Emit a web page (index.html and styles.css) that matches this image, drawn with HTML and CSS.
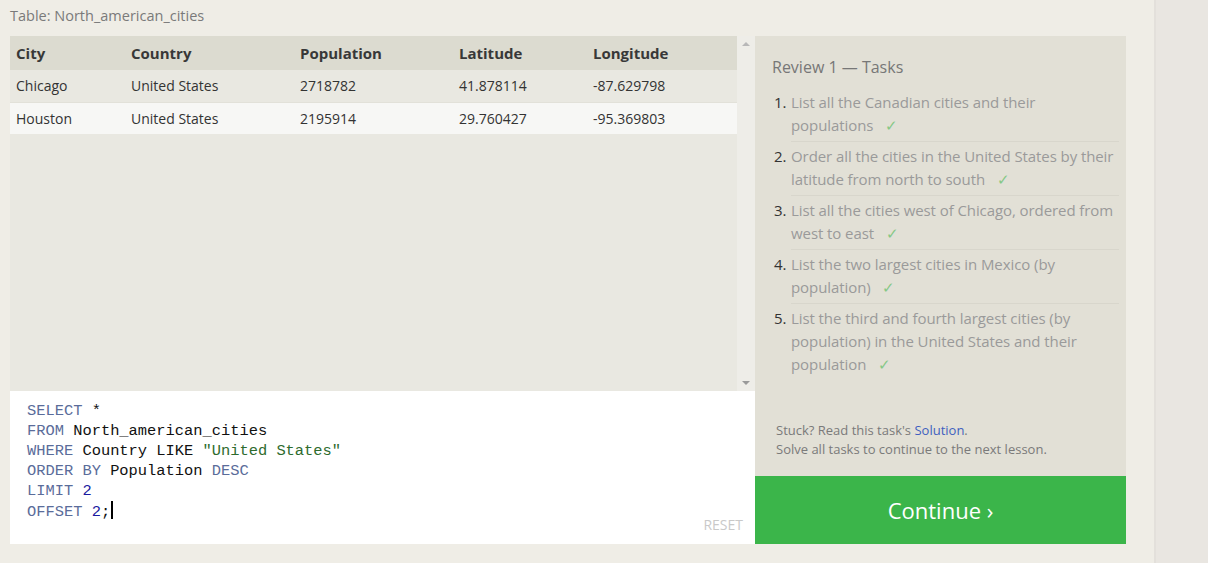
FILE: index.html
```html
<!DOCTYPE html>
<html>
<head>
<meta charset="utf-8">
<link rel="stylesheet" href="styles.css">
</head>
<body>
<div class="page">
  <main class="main">
    <div class="table-title">Table: North_american_cities</div>
    <div class="workspace">
      <div class="left">
        <div class="results">
          <div class="results-body">
            <table class="grid">
              <thead>
                <tr><th class="c1">City</th><th class="c2">Country</th><th class="c3">Population</th><th class="c4">Latitude</th><th class="c5">Longitude</th></tr>
              </thead>
              <tbody>
                <tr class="odd"><td>Chicago</td><td>United States</td><td>2718782</td><td>41.878114</td><td>-87.629798</td></tr>
                <tr class="even"><td>Houston</td><td>United States</td><td>2195914</td><td>29.760427</td><td>-95.369803</td></tr>
              </tbody>
            </table>
          </div>
          <div class="scrollbar">
            <span class="arrow up"></span>
            <span class="arrow down"></span>
          </div>
        </div>
        <div class="editor">
<pre class="code"><span class="kw">SELECT</span> *
<span class="kw">FROM</span> North_american_cities
<span class="kw">WHERE</span> Country LIKE <span class="str">"United States"</span>
<span class="kw">ORDER BY</span> Population <span class="kw">DESC</span>
<span class="kw">LIMIT</span> <span class="num">2</span>
<span class="kw">OFFSET</span> <span class="num">2</span>;<span class="caret"></span></pre>
          <div class="reset">RESET</div>
        </div>
      </div>
      <div class="right">
        <div class="tasks">
          <h2 class="tasks-title">Review 1 — Tasks</h2>
          <ol class="task-list">
            <li><span class="n">1.</span><span class="t">List all the Canadian cities and their populations <span class="check">✓</span></span></li>
            <li><span class="n">2.</span><span class="t">Order all the cities in the United States by their latitude from north to south <span class="check">✓</span></span></li>
            <li><span class="n">3.</span><span class="t">List all the cities west of Chicago, ordered from west to east <span class="check">✓</span></span></li>
            <li><span class="n">4.</span><span class="t">List the two largest cities in Mexico (by population) <span class="check">✓</span></span></li>
            <li><span class="n">5.</span><span class="t">List the third and fourth largest cities (by population) in the United States and their population <span class="check">✓</span></span></li>
          </ol>
          <div class="hint">
            <div>Stuck? Read this task's <a class="link">Solution</a>.</div>
            <div>Solve all tasks to continue to the next lesson.</div>
          </div>
        </div>
        <div class="continue">Continue ›</div>
      </div>
    </div>
  </main>
  <aside class="side"></aside>
</div>
</body>
</html>
```

FILE: styles.css
```css
* { box-sizing: border-box; }
html, body { margin: 0; padding: 0; }
body {
  background: #efede6;
  font-family: "Open Sans", "Liberation Sans", sans-serif;
  width: 1208px;
  height: 563px;
  overflow: hidden;
}
.page { display: flex; height: 563px; }
.main { width: 1154px; padding-left: 10px; }
.side {
  width: 54px;
  background: #e9e6e1;
  border-left: 2px solid #e3e0db;
}
.table-title {
  height: 36px;
  padding-top: 6px;
  font-size: 14.5px;
  color: #7a7a7a;
}
.workspace { display: flex; }
.left { width: 745px; display: flex; flex-direction: column; }
.results {
  height: 355px;
  display: flex;
  background: #e9e8e1;
}
.results-body { width: 727px; }
.grid { border-collapse: collapse; width: 100%; }
.grid th {
  background: #dcdbd0;
  text-align: left;
  font-weight: 700;
  font-size: 15px;
  color: #383838;
  height: 34px;
  padding: 0 0 0 6px;
}
.grid td {
  font-size: 14px;
  color: #333;
  padding: 0 0 0 6px;
  height: 32px;
}
.grid tr.odd td { background: #e9e8e1; border-bottom: 1px solid #e2e1d9; }
.grid tr.even td { background: #f7f7f5; height: 32px; }
.c1 { width: 115px; }
.c2 { width: 169px; }
.c3 { width: 159px; }
.c4 { width: 134px; }
.scrollbar {
  width: 18px;
  background: #eeede8;
  position: relative;
}
.arrow {
  position: absolute;
  left: 5px;
  width: 0; height: 0;
  border-left: 4px solid transparent;
  border-right: 4px solid transparent;
}
.arrow.up { top: 6px; border-bottom: 4px solid #b8b8b8; }
.arrow.down { bottom: 6px; border-top: 4px solid #9a9a9a; }
.editor {
  height: 153px;
  background: #fff;
  position: relative;
}
.code {
  margin: 0;
  padding: 10px 0 0 17px;
  font-family: "Liberation Mono", "DejaVu Sans Mono", monospace;
  font-size: 15.4px;
  line-height: 20px;
  color: #111;
}
.kw { color: #5a6c9a; }
.num { color: #1a1aa0; }
.str { color: #2e6b2e; }
.caret {
  display: inline-block;
  width: 2px;
  height: 18px;
  background: #000;
  vertical-align: -3px;
  margin-left: 1px;
}
.reset {
  position: absolute;
  right: 12px;
  bottom: 10px;
  font-size: 14px;
  color: #c9c9c9;
}
.right { width: 371px; display: flex; flex-direction: column; }
.tasks {
  height: 440px;
  background: #e2e0d6;
  padding: 20px 7px 0 17px;
  display: flex;
  flex-direction: column;
}
.tasks-title {
  margin: 0;
  font-weight: 400;
  font-size: 16px;
  color: #777;
  line-height: 22px;
}
.task-list {
  list-style: none;
  margin: 13px 0 0 0;
  padding: 0;
}
.task-list li {
  display: flex;
  font-size: 15px;
  line-height: 23px;
  margin-bottom: 3px;
  letter-spacing: -0.08px;
}
.task-list li:last-child { margin-bottom: 0; }
.task-list .n {
  width: 17px;
  margin-left: 2px;
  color: #333;
  flex: none;
}
.task-list .t {
  color: #9a9a9a;
  flex: 1;
  padding-bottom: 4px;
  border-bottom: 1px solid #d8d6cc;
}
.task-list li:last-child .t { border-bottom: none; }
.check { color: #86c886; margin-left: 8px; }
.hint {
  margin-top: auto;
  padding: 0 0 17px 4px;
  font-size: 13px;
  line-height: 19px;
  color: #7a7a7a;
}
.link { color: #3f5fbf; }
.continue {
  height: 68px;
  background: #3bb54a;
  color: #fff;
  font-size: 22px;
  display: flex;
  align-items: center;
  justify-content: center;
}
```
